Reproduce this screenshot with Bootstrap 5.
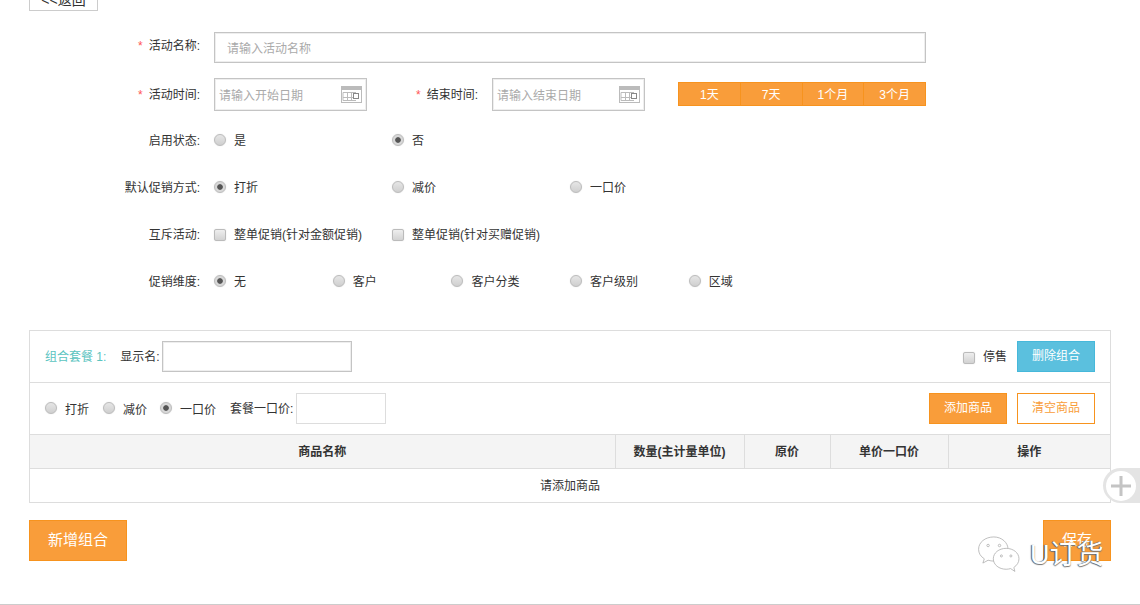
<!DOCTYPE html>
<html lang="zh-CN">
<head>
<meta charset="utf-8">
<title>组合套餐</title>
<link rel="stylesheet" href="https://cdn.jsdelivr.net/npm/bootstrap@5.3.0/dist/css/bootstrap.min.css">
<style>
html,body{height:605px;overflow:hidden}
body{font-family:"Liberation Sans","Noto Sans CJK SC",sans-serif;font-size:12px;color:#333;background:#fff;position:relative}
.pg{display:flow-root;height:605px;padding:0 29px;border-bottom:1px solid #ccc;box-sizing:border-box}
.back{display:block;width:69px;height:28px;margin-top:-17px;border:1px solid #ccc;border-radius:0;background:#fff;color:#333;font-size:14px;line-height:26px;padding:3px 0 0;text-align:center}
.frm{margin-top:21px}
.lbl{width:171px;text-align:right;flex:none;white-space:nowrap}
.rw-a .lbl{padding-bottom:4px}
.lbl i,.lbl2 i{color:#f55;font-style:normal;margin-right:6px}
.lbl2{width:111px;text-align:right;flex:none;white-space:nowrap}
.fld{height:31px;border:1px solid #c4c4c4;box-shadow:inset 0 0 0 1px #eee;border-radius:0;font-size:12px;padding:2px 12px 0;width:712px;margin-left:14px;flex:none;outline:0;background:#fff;color:#333}
.fld::placeholder,.dt input::placeholder{color:#aaa;opacity:1}
.rw{display:flex;align-items:center}
.rw-a{height:31px}
.rw-b{height:33px;margin-top:15px}
.rw-c{height:16px}
.r1{margin-top:22px}
.r2,.r3,.r4{margin-top:31px}
.dt{width:153px;height:33px;border:1px solid #c4c4c4;box-shadow:inset 0 0 0 1px #eee;margin-left:14px;flex:none;display:flex;align-items:center;padding:0 4px 0 4px;background:#fff}
.dt input{border:0;outline:0;min-width:0;flex:1;font-size:12px;padding:2px 0 0;background:transparent;color:#333;width:100px}
.dt2{margin-left:14px}
.qk{margin-left:33px;display:flex;width:248px;height:24px;margin-top:-1px;flex:none}
.qk-b{flex:1;background:#f99d3a;color:#fff;border:1px solid #f7931e;border-left-width:0;border-radius:0;font-size:12px;line-height:22px;padding:1px 0 0;text-align:center}
.qk-b:first-child{border-left-width:1px}
.opts{display:flex;margin-left:14px}
.opt{display:flex;align-items:center;width:178px;flex:none;white-space:nowrap;margin:0}
.opt-s{width:118.7px}
.rd,.ck{appearance:none;-webkit-appearance:none;width:12px;height:12px;margin:-3px 8px 0 0;flex:none;border:1px solid #bbb;background:linear-gradient(#e6e6e6,#cfcfcf);box-shadow:0 0 1px #ccc;display:block}
.rd{border-radius:50%}
.ck{border-radius:2px;background:linear-gradient(#eee,#d2d2d2);margin-top:-1px}
.rd:checked{background:radial-gradient(circle,#555 0,#555 2.4px,#d8d8d8 3.2px,#d8d8d8 100%)}
.pnl{margin-top:40px;border:1px solid #ddd;width:1082px}
.ph{height:52px;border-bottom:1px solid #ddd;padding:0 15px;display:flex;align-items:center}
.ttl{color:#5bc4bf;font-size:12px;margin-right:14px;white-space:nowrap}
.inp{border:1px solid #c4c4c4;box-shadow:inset 0 0 0 1px #eee;height:31px;width:190px;margin-left:2px;outline:0;padding:0 4px;background:#fff;border-radius:0}
.inp2{border:1px solid #ddd;width:90px;margin-left:3px;height:31px;outline:0;background:#fff}
.gp{margin:0 14px 0 0;padding-top:2px;display:flex;align-items:center}
.gp-n{margin-right:13px}
.gp2{margin:0 10px 0 auto;display:flex;align-items:center}
.gp2 .ck{margin-top:3px}
.act{width:78px;height:31px;border-radius:0;font-size:12px;padding:0;line-height:29px;text-align:center;flex:none}
.a-blue{background:#5bc0de;border:1px solid #46b8da;color:#fff}
.a-or{background:#f99d3a;border:1px solid #f7931e;color:#fff}
.a-ln{background:#fff;border:1px solid #f7931e;color:#f99d3a;margin-left:10px}
.tb{width:100%;margin:0;table-layout:fixed;font-size:12px;color:#333}
.tb th{height:33px;background:#f4f4f4;border-right:1px solid #ddd;border-bottom:1px solid #ddd;text-align:center;vertical-align:middle;padding:2px 0 0;font-weight:700;color:#333}
.tb th:last-child{border-right:0}
.tb td{height:34px;text-align:center;vertical-align:middle;padding:2px 0 0;color:#333;border:0}
.c1{width:585px}.c2{width:129px}.c3{width:86px}.c4{width:118px}
.foot{margin-top:17px;display:flex;justify-content:space-between;width:1082px}
.big{height:41px;background:#f99d3a;border:1px solid #f7931e;color:#fff;font-size:15px;border-radius:0;padding:0;text-align:center}
.big1{width:98px}.big2{width:68px}
.plus{position:absolute;left:1103px;top:468px;width:37px;height:35px;background:#e4e4e4;border-radius:18px 0 0 18px;display:flex;align-items:center;padding-left:3px}
.plus-c{width:30px;height:30px;border-radius:50%;background:#fff;display:flex;align-items:center;justify-content:center}
.wm{position:absolute;left:977px;top:536px;display:flex;align-items:center;pointer-events:none}
.wm-t{font-size:27px;color:#fff;line-height:36px;margin-left:8px;text-shadow:-1px 0 1px #555,0 1px 1px #777;white-space:nowrap}
</style>
</head>
<body>
<div class="pg">
  <button class="back btn" type="button">&lt;&lt;返回</button>
  <form class="frm">
    <div class="rw rw-a">
      <label class="lbl"><i>*</i>活动名称:</label>
      <input class="fld" placeholder="请输入活动名称">
    </div>
    <div class="rw rw-b">
      <label class="lbl"><i>*</i>活动时间:</label>
      <div class="dt"><input placeholder="请输入开始日期">
        <svg width="21" height="17" viewBox="0 0 21 17"><rect x=".5" y=".5" width="20" height="16" fill="#fff" stroke="#bbb"/><rect x="0" y="0" width="21" height="4" fill="#bbb"/><path d="M2 6.500H15M2 11.500H15M2 14.500H15M2 6.500V14.500M6.500 6.500V14.500M10.500 6.500V14.500" fill="none" stroke="#bbb"/><rect x="12.500" y="7.500" width="5" height="5" fill="#fff" stroke="#888"/></svg>
      </div>
      <label class="lbl2"><i>*</i>结束时间:</label>
      <div class="dt dt2"><input placeholder="请输入结束日期">
        <svg width="21" height="17" viewBox="0 0 21 17"><rect x=".5" y=".5" width="20" height="16" fill="#fff" stroke="#bbb"/><rect x="0" y="0" width="21" height="4" fill="#bbb"/><path d="M2 6.500H15M2 11.500H15M2 14.500H15M2 6.500V14.500M6.500 6.500V14.500M10.500 6.500V14.500" fill="none" stroke="#bbb"/><rect x="12.500" y="7.500" width="5" height="5" fill="#fff" stroke="#888"/></svg>
      </div>
      <div class="qk">
        <button type="button" class="qk-b btn">1天</button>
        <button type="button" class="qk-b btn">7天</button>
        <button type="button" class="qk-b btn">1个月</button>
        <button type="button" class="qk-b btn">3个月</button>
      </div>
    </div>
    <div class="rw rw-c r1">
      <label class="lbl">启用状态:</label>
      <div class="opts">
        <label class="opt"><input class="rd" type="radio" name="a">是</label>
        <label class="opt"><input class="rd" type="radio" name="a" checked>否</label>
      </div>
    </div>
    <div class="rw rw-c r2">
      <label class="lbl">默认促销方式:</label>
      <div class="opts">
        <label class="opt"><input class="rd" type="radio" name="b" checked>打折</label>
        <label class="opt"><input class="rd" type="radio" name="b">减价</label>
        <label class="opt"><input class="rd" type="radio" name="b">一口价</label>
      </div>
    </div>
    <div class="rw rw-c r3">
      <label class="lbl">互斥活动:</label>
      <div class="opts">
        <label class="opt"><input class="ck" type="checkbox">整单促销(针对金额促销)</label>
        <label class="opt"><input class="ck" type="checkbox">整单促销(针对买赠促销)</label>
      </div>
    </div>
    <div class="rw rw-c r4">
      <label class="lbl">促销维度:</label>
      <div class="opts">
        <label class="opt opt-s"><input class="rd" type="radio" name="c" checked>无</label>
        <label class="opt opt-s"><input class="rd" type="radio" name="c">客户</label>
        <label class="opt opt-s"><input class="rd" type="radio" name="c">客户分类</label>
        <label class="opt opt-s"><input class="rd" type="radio" name="c">客户级别</label>
        <label class="opt opt-s"><input class="rd" type="radio" name="c">区域</label>
      </div>
    </div>
    <div class="pnl">
      <div class="ph">
        <span class="ttl">组合套餐 1:</span>
        <span>显示名:</span><input class="inp">
        <label class="gp2"><input class="ck" type="checkbox">停售</label>
        <button type="button" class="act a-blue btn">删除组合</button>
      </div>
      <div class="ph">
        <label class="gp"><input class="rd" type="radio" name="d">打折</label>
        <label class="gp gp-n"><input class="rd" type="radio" name="d">减价</label>
        <label class="gp"><input class="rd" type="radio" name="d" checked>一口价</label>
        <span>套餐一口价:</span><input class="inp2">
        <button type="button" class="act a-or btn ms-auto">添加商品</button>
        <button type="button" class="act a-ln btn">清空商品</button>
      </div>
      <table class="tb table">
        <thead><tr>
          <th class="c1">商品名称</th><th class="c2">数量(主计量单位)</th><th class="c3">原价</th><th class="c4">单价一口价</th><th>操作</th>
        </tr></thead>
        <tbody><tr><td colspan="5">请添加商品</td></tr></tbody>
      </table>
    </div>
    <div class="foot">
      <button type="button" class="big big1 btn">新增组合</button>
      <button type="button" class="big big2 btn">保存</button>
    </div>
  </form>
</div>
<div class="plus"><div class="plus-c"><svg width="20" height="20" viewBox="0 0 20 20"><path d="M10 0V20M0 10H20" stroke="#c4c4c4" stroke-width="3"/></svg></div></div>
<div class="wm">
  <svg width="45" height="38" viewBox="0 0 46 40" fill="#fff" stroke="#aaa" stroke-width=".8">
    <path d="M17 1C8 1 1 6.500 1 14c0 4 2 7.500 6 10l-1.500 4.500 5.500-3c2 .6 4 .9 6 .9 8.500 0 15-5.500 15-12.400S25.500 1 17 1z"/>
    <path d="M30 13c-7.500 0-13.500 4.700-13.500 11s6 11 13.500 11c1.700 0 3.200-.3 4.700-.7l4.500 3-1.100-4.200c3.200-2.100 5.400-5.300 5.400-9.100 0-6.300-6-11-13.500-11z"/>
    <circle cx="11" cy="10" r="1.300"/><circle cx="23" cy="10" r="1.300"/><circle cx="25" cy="21" r="1.100"/><circle cx="35" cy="21" r="1.100"/>
  </svg>
  <span class="wm-t">U订货</span>
</div>
<script src="https://cdn.jsdelivr.net/npm/bootstrap@5.3.0/dist/js/bootstrap.bundle.min.js"></script>
</body>
</html>
